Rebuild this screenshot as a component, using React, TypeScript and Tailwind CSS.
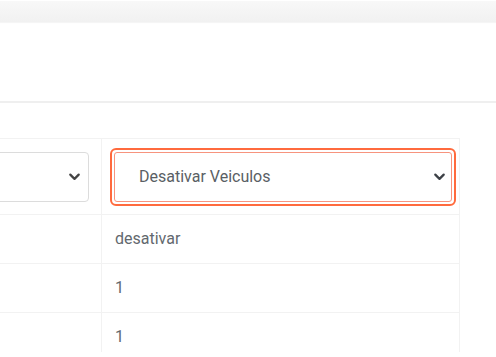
import React from 'react';

const ROWS = ['desativar', '1', '1'];

const Chevron: React.FC<{ className?: string }> = ({ className }) => (
  <svg viewBox="0 0 16 16" className={className} fill="none" stroke="currentColor" strokeWidth={2.4} strokeLinecap="round" strokeLinejoin="round">
    <path d="M3.5 6l4.5 4.5L12.5 6" />
  </svg>
);

const App: React.FC = () => {
  return (
    <div className="w-[496px] h-[357px] overflow-hidden bg-white font-['Roboto',sans-serif]">
      {/* top toolbar strip */}
      <div className="h-[22px] border-t border-white bg-gradient-to-b from-[#f8f8f8] to-[#f1f1f1] shadow-[0_1px_1px_rgba(0,0,0,0.04)]" />

      {/* page heading area */}
      <div className="h-[81px] border-b-2 border-[#efefef]" />

      <div className="pt-[35px] ml-[-60px]">
        <div className="w-[520px] grid grid-cols-[162px_358px] border-t border-r border-[#f2f2f2]">
          {/* header with filters */}
          <div className="h-[76px] border-r border-b border-[#f2f2f2] flex items-center pl-[12px] pr-[12px]">
            <div className="w-full h-[50px] border border-[#dcdcdc] rounded-[4px] flex items-center justify-end pr-[6px]">
              <Chevron className="w-[15px] h-[15px] text-[#444]" />
            </div>
          </div>
          <div className="h-[76px] border-b border-[#f2f2f2] flex items-center pl-[8px] pr-[4px]">
            <div className="w-full h-[58px] border-2 border-[#ff6a3d] rounded-[6px] p-[2px]">
              <div className="h-full border border-[#f7947e] rounded-[3px] flex items-center justify-between pl-[24px] pr-[4px]">
                <span className="text-[16px] text-[#5a5f65]">Desativar Veiculos</span>
                <Chevron className="w-[15px] h-[15px] text-[#3c4046]" />
              </div>
            </div>
          </div>

          {/* data rows */}
          {ROWS.map((val, i) => (
            <React.Fragment key={i}>
              <div className={`border-r border-[#f2f2f2] ${i < ROWS.length - 1 ? 'h-[49px] border-b' : 'h-[39px]'}`} />
              <div className={`border-[#f2f2f2] pl-[13px] ${i < ROWS.length - 1 ? 'h-[49px] border-b flex items-center' : 'h-[39px] pt-[12px]'}`}>
                <span className="text-[16px] text-[#62686e]">{val}</span>
              </div>
            </React.Fragment>
          ))}
        </div>
      </div>
    </div>
  );
};

export default App;
